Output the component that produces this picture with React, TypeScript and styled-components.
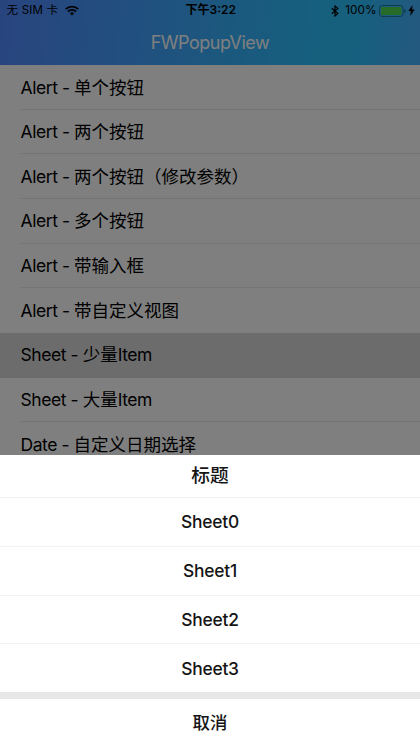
import React from "react";
import styled, { createGlobalStyle } from "styled-components";

const GlobalStyle = createGlobalStyle`
  * { box-sizing: border-box; }
  body { margin: 0; background: #fff; }
`;

const Screen = styled.div`
  position: relative;
  width: 420px;
  height: 747px;
  overflow: hidden;
  background: #fff;
  color: #000;
  font-family: Inter, "Noto Sans CJK SC", sans-serif;
`;

const Header = styled.header`
  height: 65px;
  background: linear-gradient(95deg, #5088ff 0%, #508cff 4%, #2cc0fc 76%, #2cc0fc 84%, #48b0ff 100%);
`;

const StatusBar = styled.div`
  display: grid;
  grid-template-columns: 1fr auto 1fr;
  align-items: center;
  height: 21px;
  padding: 0 5px 0 6.5px;
  font-size: 11.5px;
  line-height: 21px;
`;

const StatusGroup = styled.div<{ $end?: boolean }>`
  display: flex;
  align-items: center;
  justify-content: ${(p) => (p.$end ? "flex-end" : "flex-start")};
  white-space: nowrap;
`;

const Carrier = styled.span`
  width: 58.5px;
  letter-spacing: 0.2px;
`;

const Clock = styled.span`
  font-weight: 600;
  font-size: 12px;
  line-height: 20px;
  padding-bottom: 1px;
`;

const Percent = styled.span`
  margin: 0 2.5px 0 6.5px;
  font-size: 11.8px;
`;

const NavTitle = styled.h1`
  margin: 0;
  height: 44px;
  line-height: 44px;
  text-align: center;
  font-size: 18px;
  font-weight: 400;
  letter-spacing: -0.5px;
  color: #fff;
`;

const List = styled.ul`
  list-style: none;
  margin: 0;
  padding: 0;
`;

const Row = styled.li<{ $selected?: boolean }>`
  height: 44.67px;
  padding-left: 20.5px;
  background: ${(p) => (p.$selected ? "#d9d9d9" : "#fff")};
`;

const RowLabel = styled.div<{ $divider: boolean }>`
  height: 100%;
  padding-top: 0.5px;
  line-height: 44px;
  font-size: 17.5px;
  white-space: pre;
  border-bottom: 1px solid ${(p) => (p.$divider ? "#e8e8ea" : "transparent")};
`;

const Latin = styled.span`
  letter-spacing: -0.43px;
`;

const Backdrop = styled.div`
  position: absolute;
  inset: 0;
  background: rgba(0, 0, 0, 0.5);
`;

const Sheet = styled.section`
  position: absolute;
  left: 0;
  right: 0;
  bottom: 0;
  height: 292px;
  background: #fff;
  color: #151515;
  text-align: center;
`;

const SheetTitle = styled.h2`
  margin: 0;
  height: 42px;
  line-height: 42px;
  font-size: 18.7px;
  font-weight: 500;
`;

const SheetButton = styled.button`
  display: block;
  width: 100%;
  height: 48.75px;
  padding: 0;
  border: 0;
  border-top: 1px solid #f3f3f3;
  background: #fff;
  color: inherit;
  font: 500 17.4px Inter, "Noto Sans CJK SC", sans-serif;
  letter-spacing: -0.25px;
`;

const Gap = styled.div`
  height: 7px;
  background: #e7e7e7;
`;

const CancelButton = styled(SheetButton)`
  height: 48px;
  padding-bottom: 3px;
  border-top: 0;
  letter-spacing: 0;
`;

const rows = [
  "Alert - 单个按钮",
  "Alert - 两个按钮",
  "Alert - 两个按钮（修改参数）",
  "Alert - 多个按钮",
  "Alert - 带输入框",
  "Alert - 带自定义视图",
  "Sheet - 少量Item",
  "Sheet - 大量Item",
  "Date - 自定义日期选择",
];
const selected = 6;

/* Latin runs are tracked tighter than the Chinese ones. */
const MixedText = ({ text }: { text: string }) => (
  <>
    {text
      .split(/([\x20-\x7e]+)/)
      .filter(Boolean)
      .map((run, i) => (/^[\x20-\x7e]/.test(run) ? <Latin key={i}>{run}</Latin> : run))}
  </>
);

const WifiIcon = () => (
  <svg width="14" height="11" viewBox="0 0 14 11" fill="none" stroke="#000" strokeWidth="1.8">
    <path d="M.7 4.2a9 9 0 0 1 12.6 0M2.9 6.6a5.8 5.8 0 0 1 8.2 0" />
    <path d="M4.8 8.3a3.2 3.2 0 0 1 4.4 0L7 10.5z" fill="#000" stroke="none" />
  </svg>
);

const BluetoothIcon = () => (
  <svg width="8" height="12" viewBox="0 0 8 12" fill="none" stroke="#000" strokeWidth="1.2">
    <path d="M.8 3.2l6 5.4L4 11V1l2.8 2.4-6 5.4" />
  </svg>
);

const BatteryIcon = () => (
  <svg width="27" height="12" viewBox="0 0 27 12">
    <rect x=".5" y=".5" width="23.5" height="11" rx="2.5" fill="none" stroke="#1c7aa4" />
    <rect x="2" y="2" width="20.5" height="8" rx=".8" fill="#4cd850" />
    <path d="M25 4q1.8.4 1.8 2T25 8z" fill="#1c7aa4" />
  </svg>
);

const BoltIcon = () => (
  <svg width="9" height="11" viewBox="-2 0 9 11">
    <path d="M4.5 0L.3 6h2.5l-.6 5L6.7 4.6H4.1z" />
  </svg>
);

export default function App() {
  return (
    <Screen>
      <GlobalStyle />
      <Header>
        <StatusBar>
          <StatusGroup>
            <Carrier>无 SIM 卡</Carrier>
            <WifiIcon />
          </StatusGroup>
          <Clock>下午3:22</Clock>
          <StatusGroup $end>
            <BluetoothIcon />
            <Percent>100%</Percent>
            <BatteryIcon />
            <BoltIcon />
          </StatusGroup>
        </StatusBar>
        <NavTitle>FWPopupView</NavTitle>
      </Header>
      <List>
        {rows.map((label, i) => (
          <Row key={label} $selected={i === selected}>
            <RowLabel $divider={i !== selected && i !== selected - 1}>
              <MixedText text={label} />
            </RowLabel>
          </Row>
        ))}
      </List>
      <Backdrop />
      <Sheet>
        <SheetTitle>标题</SheetTitle>
        {[0, 1, 2, 3].map((n) => (
          <SheetButton key={n}>Sheet{n}</SheetButton>
        ))}
        <Gap />
        <CancelButton>取消</CancelButton>
      </Sheet>
    </Screen>
  );
}
